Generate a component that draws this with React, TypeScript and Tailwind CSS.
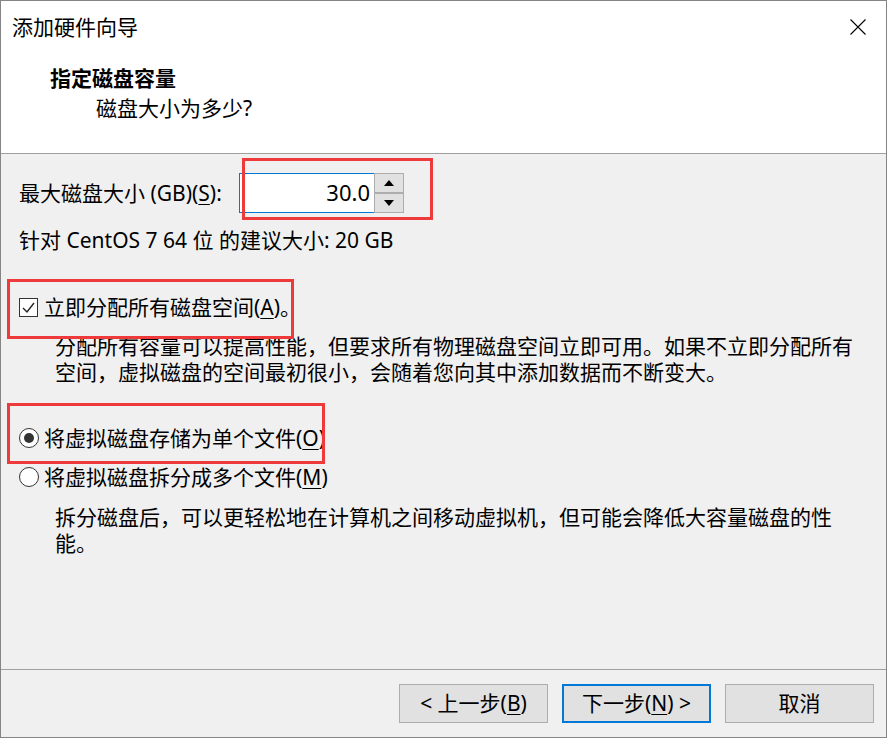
import type { ReactNode } from "react"

function Key({ children }: { children: ReactNode }) {
  return <span className="underline decoration-1 underline-offset-[3px]">{children}</span>
}

function Mark({ className }: { className: string }) {
  return <div className={`pointer-events-none absolute border-[3px] border-[#ef3a3c] ${className}`} />
}

function SpinButton({ up }: { up?: boolean }) {
  return (
    <div className="flex h-[20px] w-[30px] items-center justify-center border border-[#adadad] bg-[#e1e1e1]">
      <svg width="10" height="6" viewBox="0 0 10 6">
        {up ? <path d="M0 6 L5 0 L10 6 Z" fill="#000" /> : <path d="M0 0 L5 6 L10 0 Z" fill="#000" />}
      </svg>
    </div>
  )
}

function WizardButton({ children, active }: { children: ReactNode; active?: boolean }) {
  return (
    <button
      className={`flex h-[39px] w-[149px] items-center justify-center bg-[#e1e1e1] leading-none ${
        active ? "border-2 border-[#0078d7]" : "border border-[#adadad]"
      }`}
    >
      {children}
    </button>
  )
}

export default function App() {
  return (
    <div className="relative flex h-[738px] w-[887px] flex-col overflow-hidden border border-[#858585] bg-[#f0f0f0] font-['Noto_Sans','Noto_Sans_CJK_SC',sans-serif] text-[21px] text-black">
      {/* header */}
      <header className="h-[153px] shrink-0 border-b border-[#a0a0a0] bg-white">
        <div className="flex items-start justify-between">
          <h1 className="mt-[11px] ml-[11px] leading-[30px] font-normal">添加硬件向导</h1>
          <svg className="mt-[18px] mr-[20px]" width="16" height="16" viewBox="0 0 16 16">
            <path d="M0.5 0.5 L15.5 15.5 M15.5 0.5 L0.5 15.5" stroke="#000" strokeWidth="1.1" />
          </svg>
        </div>
        <h2 className="mt-[21px] ml-[49px] leading-[30px] font-bold">指定磁盘容量</h2>
        <p className="ml-[95px] leading-[30px]">磁盘大小为多少?</p>
      </header>

      {/* body */}
      <main className="flex flex-1 flex-col pl-[18px]">
        <div className="mt-[19px] flex h-[40px] items-center">
          <label className="w-[220px] leading-[26px]">
            最大磁盘大小 (GB)(<Key>S</Key>):
          </label>
          <div className="h-[40px] w-[135px] border border-r-0 border-[#0078d7] bg-white pr-[4px] text-right text-[22px] leading-[37px]">
            30.0
          </div>
          <div className="flex flex-col">
            <SpinButton up />
            <SpinButton />
          </div>
        </div>

        <p className="mt-[14px] leading-[26px]">针对 CentOS 7 64 位 的建议大小: 20 GB</p>

        <div className="mt-[41px] flex h-[26px] items-center gap-[6px]">
          <div className="flex h-[19px] w-[19px] items-center justify-center border border-[#333] bg-white">
            <svg width="17" height="17" viewBox="0 0 17 17">
              <path d="M3 9 L7 13 L14 4" fill="none" stroke="#222" strokeWidth="1.4" />
            </svg>
          </div>
          <span className="leading-[26px]">
            立即分配所有磁盘空间(<Key>A</Key>)。
          </span>
        </div>

        <p className="mt-[13px] ml-[36px] w-[805px] leading-[26px]">
          分配所有容量可以提高性能，但要求所有物理磁盘空间立即可用。如果不立即分配所有空间，虚拟磁盘的空间最初很小，会随着您向其中添加数据而不断变大。
        </p>

        <div className="mt-[40px] flex h-[26px] items-center gap-[5px]">
          <div className="flex h-[20px] w-[20px] items-center justify-center rounded-full border border-[#333] bg-white">
            <div className="h-[10px] w-[10px] rounded-full bg-[#333]" />
          </div>
          <span className="leading-[26px]">
            将虚拟磁盘存储为单个文件(<Key>O</Key>)
          </span>
        </div>

        <div className="mt-[13px] flex h-[26px] items-center gap-[5px]">
          <div className="h-[20px] w-[20px] rounded-full border border-[#333] bg-white" />
          <span className="leading-[26px]">
            将虚拟磁盘拆分成多个文件(<Key>M</Key>)
          </span>
        </div>

        <p className="mt-[14px] ml-[36px] w-[805px] leading-[26px]">
          拆分磁盘后，可以更轻松地在计算机之间移动虚拟机，但可能会降低大容量磁盘的性能。
        </p>
      </main>

      {/* footer */}
      <footer className="flex h-[68px] shrink-0 items-start justify-end gap-[14px] border-t border-[#a0a0a0] pt-[14px] pr-[12px]">
        <WizardButton>
          &lt; 上一步(<Key>B</Key>)
        </WizardButton>
        <WizardButton active>
          下一步(<Key>N</Key>) &gt;
        </WizardButton>
        <WizardButton>取消</WizardButton>
      </footer>

      {/* red annotation boxes */}
      <Mark className="top-[157px] left-[241px] h-[62px] w-[191px]" />
      <Mark className="top-[278px] left-[6px] h-[60px] w-[287px]" />
      <Mark className="top-[402px] left-[6px] h-[61px] w-[318px]" />
    </div>
  )
}
